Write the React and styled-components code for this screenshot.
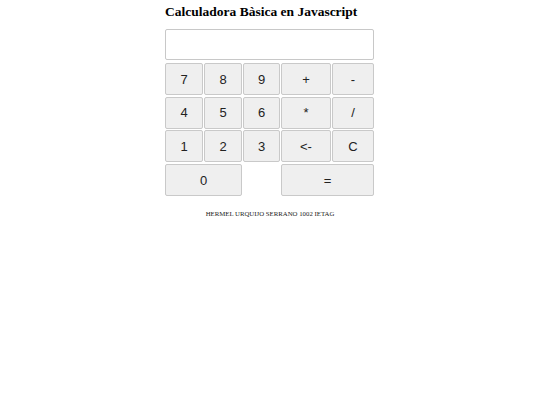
import React, { useState } from "react";
import styled, { createGlobalStyle } from "styled-components";

const GlobalStyle = createGlobalStyle`
  body {
    margin: 0;
    background: #fff;
    font-family: "Liberation Serif", "Times New Roman", serif;
  }
`;

const Page = styled.div`
  display: flex;
  flex-direction: column;
  align-items: center;
  padding-top: 3px;
`;

const Calc = styled.div`
  width: 209px;
  margin-right: 1px;
  display: flex;
  flex-direction: column;
`;

const Title = styled.h3`
  margin: 0 0 8px 0;
  font-size: 13.5px;
  line-height: 18px;
  font-weight: bold;
  color: #000;
  white-space: nowrap;
`;

const Display = styled.input`
  box-sizing: border-box;
  width: 209px;
  height: 31px;
  border: 1px solid #c8c8c8;
  border-radius: 2px;
  margin: 0 0 3px 0;
  padding: 0 6px;
  font-family: "Liberation Sans", Arial, sans-serif;
  font-size: 14px;
  outline: none;
`;

const Keys = styled.div`
  display: grid;
  grid-template-columns: 38px 38px 37px 50px 42px;
  grid-auto-rows: 32px;
  column-gap: 1px;
  row-gap: 1.7px;
`;

const Key = styled.button`
  grid-column: span ${(p) => p.span || 1};
  box-sizing: border-box;
  margin: 0;
  padding: 0;
  background: #efefef;
  border: 1px solid #c9c9c9;
  border-radius: 2px;
  font-family: "Liberation Sans", Arial, sans-serif;
  font-size: 13px;
  color: #222;
  cursor: pointer;
`;

const Gap = styled.div``;

const Footer = styled.p`
  margin: 14px 0 0 0;
  font-size: 6.8px;
  color: #222;
  text-align: center;
`;

const App = () => {
  let [valor, setValor] = useState("");

  const pulsar = (k) => {
    if (k === "C") return setValor("");
    if (k === "<-") return setValor(valor.slice(0, -1));
    if (k === "=") {
      try {
        // eslint-disable-next-line no-new-func
        setValor(String(Function("return (" + valor + ")")()));
      } catch (e) {
        setValor("Error");
      }
      return;
    }
    setValor(valor + k);
  };

  const filas = [
    ["7", "8", "9", "+", "-"],
    ["4", "5", "6", "*", "/"],
    ["1", "2", "3", "<-", "C"],
  ];

  return (
    <>
      <GlobalStyle />
      <Page>
        <Calc>
          <Title>Calculadora Bàsica en Javascript</Title>
          <Display value={valor} readOnly />
          <Keys>
            {filas.flat().map((k) => (
              <Key key={k} onClick={() => pulsar(k)}>
                {k}
              </Key>
            ))}
            <Key span={2} onClick={() => pulsar("0")}>
              0
            </Key>
            <Gap />
            <Key span={2} onClick={() => pulsar("=")}>
              =
            </Key>
          </Keys>
        </Calc>
        <Footer>HERMEL URQUIJO SERRANO 1002 IETAG</Footer>
      </Page>
    </>
  );
};

export default App;
